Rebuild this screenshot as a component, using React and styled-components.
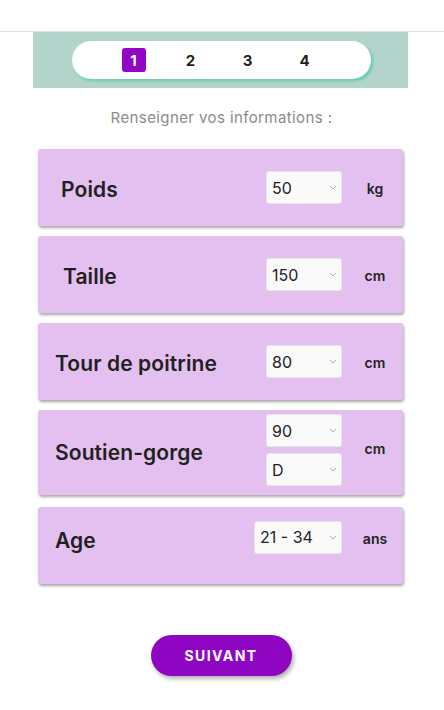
import React from "react";
import styled, { createGlobalStyle } from "styled-components";

const Global = createGlobalStyle`
  html, body { margin: 0; padding: 0; background: #fff; }
  body { font-family: Inter, "Noto Sans", "DejaVu Sans", sans-serif; color: #231f20; }
  * { box-sizing: border-box; }
`;

const Page = styled.div`
  width: 444px;
  min-height: 710px;
  background: #fff;
`;

const Header = styled.header`
  height: 32px;
  border-bottom: 1px solid #e0e0e0;
  background: #fff;
`;

const Container = styled.main`
  width: 375px;
  margin-left: 33px;
  display: flex;
  flex-direction: column;
`;

const StepBand = styled.div`
  height: 56px;
  background: #b3d4cb;
  display: flex;
  align-items: center;
  justify-content: center;
  padding-left: 1px;
`;

const StepPill = styled.div`
  width: 299px;
  height: 38px;
  border-radius: 19px;
  background: #fff;
  box-shadow: 2px 2px 3px rgba(70, 200, 170, 0.75);
  display: flex;
  align-items: center;
  justify-content: center;
  gap: 33px;
  padding-right: 4px;
`;

const Step = styled.span`
  width: 24px;
  height: 24px;
  border-radius: 3px;
  display: flex;
  align-items: center;
  justify-content: center;
  font-size: 15px;
  font-weight: 700;
  background: ${(p) => (p.$active ? "#9106c4" : "transparent")};
  color: ${(p) => (p.$active ? "#fff" : "#1f1f1f")};
`;

const Subtitle = styled.p`
  margin: 20px 0 21px;
  line-height: 20px;
  text-align: center;
  font-size: 15px;
  font-weight: 400;
  letter-spacing: 0.4px;
  color: #8a8a8a;
  padding-left: 2px;
`;

const Cards = styled.div`
  display: flex;
  flex-direction: column;
  gap: 10px;
  padding: 0 5px;
`;

const Card = styled.section`
  min-height: ${(p) => p.$h}px;
  margin-top: ${(p) => p.$mt || 0}px;
  background: #e3c0ef;
  border-radius: 3px;
  box-shadow: 1px 2px 3px rgba(0, 0, 0, 0.35);
  display: flex;
  align-items: center;
  padding: 0 0 ${(p) => p.$pb || 0}px 17px;
`;

const Label = styled.div`
  flex: 1;
  padding-left: ${(p) => p.$indent || 0}px;
  margin-top: ${(p) => p.$dy || 0}px;
  font-size: 21px;
  font-weight: 600;
  color: #231f20;
  letter-spacing: 0.1px;
`;

const Selects = styled.div`
  display: flex;
  flex-direction: column;
  gap: 6px;
  margin-top: ${(p) => p.$dy || 0}px;
`;

const SelectWrap = styled.div`
  position: relative;
  width: ${(p) => p.$w || 76}px;
  height: 33px;
`;

const Select = styled.select`
  appearance: none;
  -webkit-appearance: none;
  width: 100%;
  height: 100%;
  border: 1px solid #e6e6e6;
  border-radius: 3px;
  background: #fafafa;
  font-family: Inter, "Noto Sans", sans-serif;
  font-size: 16px;
  color: #222;
  padding: 0 0 0 5px;
  outline: none;
`;

const Chevron = styled.svg`
  position: absolute;
  right: 5px;
  top: 14px;
  width: 8px;
  height: 5px;
  pointer-events: none;
`;

const Unit = styled.div`
  width: 56px;
  margin-left: 5px;
  text-align: center;
  font-size: 14px;
  font-weight: 600;
  color: #222;
  margin-top: ${(p) => p.$dy || 0}px;
`;

const Footer = styled.div`
  display: flex;
  justify-content: center;
  padding-top: 51px;
  padding-left: 1px;
`;

const NextButton = styled.button`
  width: 141px;
  height: 41px;
  border: none;
  border-radius: 21px;
  background: #8e05c2;
  color: #fff;
  font-family: Inter, "Noto Sans", sans-serif;
  font-size: 14px;
  font-weight: 700;
  letter-spacing: 1.4px;
  box-shadow: 2px 3px 4px rgba(0, 0, 0, 0.3);
  cursor: pointer;
`;

function Dropdown({ value, options, width }) {
  return (
    <SelectWrap $w={width}>
      <Select defaultValue={value}>
        {options.map((o) => (
          <option key={o} value={o}>
            {o}
          </option>
        ))}
      </Select>
      <Chevron viewBox="0 0 8 5">
        <path d="M1 1 L4 4 L7 1" fill="none" stroke="#b0b0b0" strokeWidth="1" />
      </Chevron>
    </SelectWrap>
  );
}

const range = (a, b, s = 1) => {
  const r = [];
  for (let i = a; i <= b; i += s) r.push(String(i));
  return r;
};

export default function App() {
  return (
    <Page>
      <Global />
      <Header />
      <Container>
        <StepBand>
          <StepPill>
            <Step $active>1</Step>
            <Step>2</Step>
            <Step>3</Step>
            <Step>4</Step>
          </StepPill>
        </StepBand>
        <Subtitle>Renseigner vos informations :</Subtitle>
        <Cards>
          <Card $h={77}>
            <Label $dy={3} $indent={6}>Poids</Label>
            <Dropdown value="50" options={range(40, 150)} />
            <Unit $dy={2}>kg</Unit>
          </Card>
          <Card $h={77}>
            <Label $dy={3} $indent={8}>Taille</Label>
            <Dropdown value="150" options={range(140, 210)} />
            <Unit $dy={1}>cm</Unit>
          </Card>
          <Card $h={77}>
            <Label $dy={3}>Tour de poitrine</Label>
            <Dropdown value="80" options={range(60, 140)} />
            <Unit $dy={1}>cm</Unit>
          </Card>
          <Card $h={85}>
            <Label $dy={0}>Soutien-gorge</Label>
            <Selects $dy={-5}>
              <Dropdown value="90" options={range(70, 120, 5)} />
              <Dropdown value="D" options={["A", "B", "C", "D", "E", "F"]} />
            </Selects>
            <Unit $dy={-9}>cm</Unit>
          </Card>
          <Card $h={77} $mt={2} $pb={17}>
            <Label $dy={6}>Age</Label>
            <Dropdown value="21 - 34" width={88} options={["- 20", "21 - 34", "35 - 49", "50 +"]} />
            <Unit $dy={2}>ans</Unit>
          </Card>
        </Cards>
        <Footer>
          <NextButton>SUIVANT</NextButton>
        </Footer>
      </Container>
    </Page>
  );
}
